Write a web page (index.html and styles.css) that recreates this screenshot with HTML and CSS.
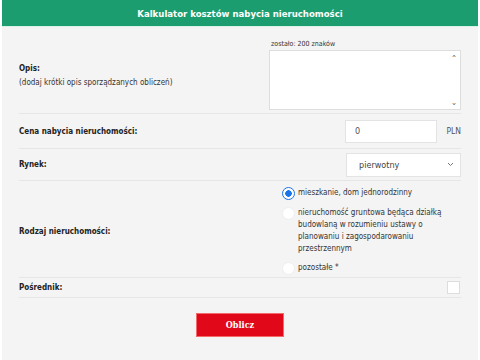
FILE: index.html
```html
<!DOCTYPE html>
<html lang="pl">
<head>
    <meta charset="UTF-8">
    <meta name="viewport" content="width=device-width, initial-scale=1.0">
    <title>Kalkulator kosztów nabycia nieruchomości</title>
    <link rel="stylesheet" href="styles.css">
</head>
<body>
    <div class="calc">
        <div class="calc-header">Kalkulator kosztów nabycia nieruchomości</div>

        <div class="calc-body">
            <div class="row row-opis">
                <div class="label">
                    <div class="label-title">Opis:</div>
                    <div class="label-note">(dodaj krótki opis sporządzanych obliczeń)</div>
                </div>
                <div class="field">
                    <div class="counter">zostało: 200 znaków</div>
                    <div class="textarea">
                        <span class="scroll-up">&#8963;</span>
                        <span class="scroll-down">&#8964;</span>
                    </div>
                </div>
            </div>

            <div class="row row-price">
                <div class="label label-title">Cena nabycia nieruchomości:</div>
                <div class="field field-right">
                    <input type="text" class="input-price" value="0">
                    <span class="unit">PLN</span>
                </div>
            </div>

            <div class="row row-market">
                <div class="label label-title">Rynek:</div>
                <div class="field field-right">
                    <div class="select">
                        <span>pierwotny</span>
                        <svg width="7" height="5" viewBox="0 0 7 5"><path d="M1 1l2.5 2.5L6 1" fill="none" stroke="#777" stroke-width="1"/></svg>
                    </div>
                </div>
            </div>

            <div class="row row-type">
                <div class="label label-title">Rodzaj nieruchomości:</div>
                <div class="field radios">
                    <div class="radio-item">
                        <span class="radio checked"></span>
                        <span class="radio-text">mieszkanie, dom jednorodzinny</span>
                    </div>
                    <div class="radio-item">
                        <span class="radio"></span>
                        <span class="radio-text">nieruchomość gruntowa będąca działką budowlaną w rozumieniu ustawy o planowaniu i zagospodarowaniu przestrzennym</span>
                    </div>
                    <div class="radio-item">
                        <span class="radio"></span>
                        <span class="radio-text">pozostałe *</span>
                    </div>
                </div>
            </div>

            <div class="row row-last">
                <div class="label label-title">Pośrednik:</div>
                <div class="field field-right">
                    <span class="checkbox"></span>
                </div>
            </div>

            <div class="actions">
                <button class="btn-calc">Oblicz</button>
            </div>
        </div>
    </div>
</body>
</html>
```

FILE: styles.css
```css
* {
    margin: 0;
    padding: 0;
    box-sizing: border-box;
}

body {
    font-family: 'DejaVu Sans Condensed', 'DejaVu Sans', Verdana, sans-serif;
    font-stretch: condensed;
    background-color: #ffffff;
    padding: 0 2px;
    color: #333333;
}

.calc-header {
    background-color: #1b9d6f;
    color: #ffffff;
    font-size: 9.5px;
    font-weight: bold;
    text-align: center;
    height: 27px;
    line-height: 27px;
    border-bottom: 1px solid #d9f3ea;
}

.calc-body {
    background-color: #f4f4f4;
    padding: 0 17px 30px 17px;
    height: 333px;
}

.row {
    display: grid;
    grid-template-columns: 250px 1fr;
    align-items: center;
    border-bottom: 1px solid #e6e6e6;
}

.row-opis {
    padding: 13px 0 3px 0;
}

.row-price {
    height: 35px;
}

.row-market {
    height: 32px;
}

.row-type {
    padding: 6px 0 2px 0;
}

.row-last {
    height: 20px;
}

.label-title {
    font-size: 8px;
    font-weight: bold;
    color: #222222;
}

.label-note {
    font-size: 8px;
    color: #333333;
    margin-top: 5px;
}

.counter {
    font-size: 7px;
    color: #333333;
    padding-left: 2px;
    margin-bottom: 2px;
}

.textarea {
    position: relative;
    background-color: #ffffff;
    border: 1px solid #dddddd;
    height: 60px;
    width: 192px;
}

.scroll-up,
.scroll-down {
    position: absolute;
    right: 3px;
    font-size: 8px;
    color: #666666;
    line-height: 8px;
}

.scroll-up {
    top: 4px;
}

.scroll-down {
    bottom: 2px;
}

.field-right {
    display: flex;
    justify-content: flex-end;
    align-items: center;
}

.input-price {
    width: 92px;
    height: 23px;
    border: 1px solid #e3e3e3;
    background-color: #ffffff;
    font-family: inherit;
    font-stretch: condensed;
    font-size: 9px;
    color: #555555;
    padding-left: 9px;
    outline: none;
}

.unit {
    font-size: 8.5px;
    color: #555555;
    width: 24px;
    text-align: right;
}

.select {
    width: 115px;
    height: 24px;
    background-color: #ffffff;
    border: 1px solid #e3e3e3;
    display: flex;
    align-items: center;
    justify-content: space-between;
    padding: 0 6px 0 12px;
    font-size: 9px;
    color: #444444;
}

.radios {
    display: flex;
    flex-direction: column;
    gap: 7px;
    padding-left: 13px;
}

.radio-item {
    display: flex;
    align-items: flex-start;
    gap: 3px;
}

.radio {
    flex: none;
    width: 13px;
    height: 13px;
    border-radius: 50%;
    background-color: #ffffff;
    border: 1px solid #eeeeee;
}

.radio.checked {
    border: 1.5px solid #1a73e8;
    background: radial-gradient(circle, #1a73e8 0 3px, #ffffff 3.5px);
}

.radio-text {
    font-size: 8px;
    line-height: 12px;
    color: #333333;
    max-width: 160px;
}

.checkbox {
    width: 13px;
    height: 13px;
    background-color: #ffffff;
    border: 1px solid #dddddd;
    margin-right: 1px;
}

.actions {
    display: flex;
    justify-content: center;
    padding-top: 15px;
}

.btn-calc {
    background-color: #e1081a;
    color: #ffffff;
    border: 1px solid #f46a6a;
    width: 88px;
    height: 24px;
    font-family: 'DejaVu Serif', serif;
    font-stretch: condensed;
    font-size: 9px;
    font-weight: bold;
}
```
